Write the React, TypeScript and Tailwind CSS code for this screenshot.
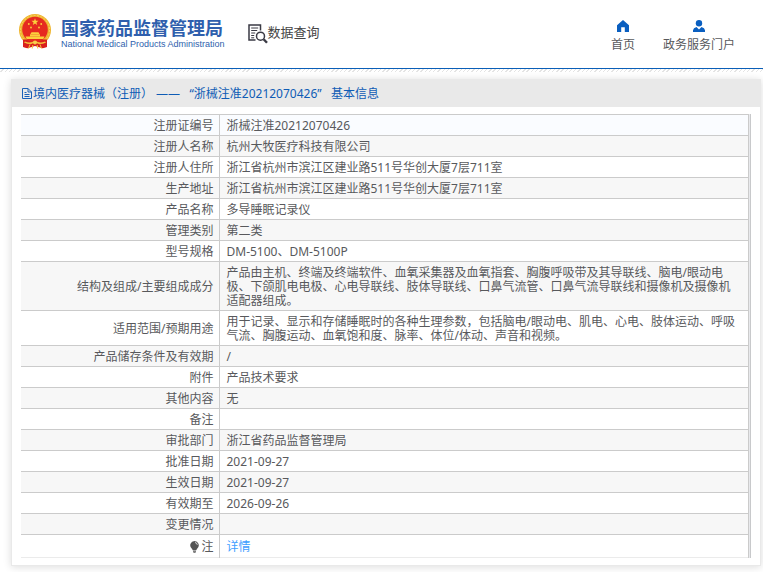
import React from 'react';

type Row = { label: string; value: string };

const ROWS: Row[] = [
  { label: '注册证编号', value: '浙械注准20212070426' },
  { label: '注册人名称', value: '杭州大牧医疗科技有限公司' },
  { label: '注册人住所', value: '浙江省杭州市滨江区建业路511号华创大厦7层711室' },
  { label: '生产地址', value: '浙江省杭州市滨江区建业路511号华创大厦7层711室' },
  { label: '产品名称', value: '多导睡眠记录仪' },
  { label: '管理类别', value: '第二类' },
  { label: '型号规格', value: 'DM-5100、DM-5100P' },
  {
    label: '结构及组成/主要组成成分',
    value:
      '产品由主机、终端及终端软件、血氧采集器及血氧指套、胸腹呼吸带及其导联线、脑电/眼动电极、下颌肌电电极、心电导联线、肢体导联线、口鼻气流管、口鼻气流导联线和摄像机及摄像机适配器组成。',
  },
  {
    label: '适用范围/预期用途',
    value:
      '用于记录、显示和存储睡眠时的各种生理参数，包括脑电/眼动电、肌电、心电、肢体运动、呼吸气流、胸腹运动、血氧饱和度、脉率、体位/体动、声音和视频。',
  },
  { label: '产品储存条件及有效期', value: '/' },
  { label: '附件', value: '产品技术要求' },
  { label: '其他内容', value: '无' },
  { label: '备注', value: '' },
  { label: '审批部门', value: '浙江省药品监督管理局' },
  { label: '批准日期', value: '2021-09-27' },
  { label: '生效日期', value: '2021-09-27' },
  { label: '有效期至', value: '2026-09-26' },
  { label: '变更情况', value: '' },
];

const Emblem: React.FC = () => (
  <svg width="32" height="35" viewBox="0 0 32 35" aria-hidden="true">
    <circle cx="16" cy="16" r="16" fill="#efb52f" />
    <circle cx="16" cy="16" r="14.5" fill="none" stroke="#f8d568" strokeWidth="1" strokeDasharray="2 1.5" />
    <path d="M4 25.500 L4 33 Q8 35 11 33.500 L16 32 L21 33.500 Q24 35 28 33 L28 25.500 Z" fill="#d9201c" />
    <circle cx="16" cy="15.500" r="12.800" fill="#e62a20" />
    <path d="M16 4.300l.9 2.500h2.600l-2.100 1.600.8 2.500-2.200-1.500-2.200 1.500.8-2.500-2.100-1.600h2.600z" fill="#fbd23c" />
    <g fill="#fbd23c">
      <circle cx="9.800" cy="10" r=".9" />
      <circle cx="22.200" cy="10" r=".9" />
      <circle cx="12" cy="13.500" r=".9" />
      <circle cx="20" cy="13.500" r=".9" />
      <path d="M11.500 20l1-1.700h7l1 1.700zM11 20.300h10v2H11zM6.500 22.500h19l-1.200 2.600H7.700z" />
    </g>
    <path d="M6 27.500q5 2 10-.5 5 2.500 10 .5l1 1q-5.500 2.500-8.500 1l-2.500-1-2.500 1q-3 1.500-8.500-1z" fill="#f4c23a" />
    <circle cx="16" cy="28.500" r="2" fill="#f7cf4d" />
    <path d="M11 30.500l-1.500 4M21 30.500l1.500 4M13.800 31l-.6 3.500M18.200 31l.6 3.500" stroke="#f4c23a" strokeWidth="1" />
  </svg>
);

const SearchDocIcon: React.FC = () => (
  <svg width="20" height="20" viewBox="0 0 20 20" fill="none" stroke="#3a3a44" aria-hidden="true">
    <path d="M7.500 16H1V1h11.500v5.500" strokeWidth="1.500" />
    <path d="M3.200 4h7M3.200 6.500h6M3.200 9h4M3.200 11.500h3M3.200 13.800h3" strokeWidth="1" />
    <circle cx="12.500" cy="12.200" r="4" strokeWidth="1.500" />
    <path d="M15.600 15.200l3.400 3.600" strokeWidth="2.400" />
  </svg>
);

const HomeIcon: React.FC = () => (
  <svg width="12" height="12" viewBox="0 0 12 12" fill="#0a5fc0" aria-hidden="true">
    <path d="M6 0L0 5.300V12h4.200V7.300h3.600V12H12V5.300z" />
  </svg>
);

const UserIcon: React.FC = () => (
  <svg width="12" height="12" viewBox="0 0 12 12" fill="#0a5fc0" aria-hidden="true">
    <circle cx="6" cy="3.200" r="3.200" />
    <path d="M0 12V10.200Q.3 8 3.500 7L6 9.500 8.500 7Q11.700 8 12 10.200V12z" />
  </svg>
);

const FileIcon: React.FC = () => (
  <svg width="10" height="11" viewBox="0 0 10 11" fill="none" stroke="#1a60b8" aria-hidden="true">
    <path d="M.5.5h5.500L9.500 4v6.500h-9zM6 .5V4h3.500M2.500 4.500h2M2.500 6.500h5M2.500 8.500h5" />
  </svg>
);

const BulbIcon: React.FC = () => (
  <svg width="9" height="12" viewBox="0 0 9 12" fill="#555" aria-hidden="true">
    <path d="M4.500 0a4.300 4.300 0 0 0-2.800 7.500L3 9.500h3l1.300-2A4.300 4.300 0 0 0 4.500 0zM3 10.200h3v.8l-.8.800H3.800L3 11z" />
    <path d="M5 1.500q2 .3 2.300 2.300" stroke="#fff" strokeWidth=".8" fill="none" />
  </svg>
);

const App: React.FC = () => {
  return (
    <div className="min-h-screen bg-white pb-1 font-['Noto_Sans','Noto_Sans_CJK_SC',sans-serif] text-[12px] leading-[14px] text-[#58595c]">
      <header className="flex h-[69px] items-start justify-between border-b border-[#0a5fb8] pl-[19px] pr-7">
        <div className="flex items-start">
          <a href="#" className="flex gap-[10px] pt-[14px] text-[#2f5fad]">
            <Emblem />
            <span className="flex flex-col pt-[2px]">
              <span className="font-['Noto_Sans_CJK_SC',sans-serif] text-[18px] font-bold leading-[22px]">国家药品监督管理局</span>
              <span className="font-['Liberation_Sans',sans-serif] text-[9px] leading-3">
                National Medical Products Administration
              </span>
            </span>
          </a>
          <a href="#" className="ml-[23px] flex items-start pt-6 text-[#444]">
            <SearchDocIcon />
            <span className="font-['Noto_Sans_CJK_SC',sans-serif] text-[13px] leading-4">数据查询</span>
          </a>
        </div>
        <nav className="flex gap-7 pt-5">
          <a href="#" className="flex flex-col items-center gap-[6px]">
            <HomeIcon />
            <span>首页</span>
          </a>
          <a href="#" className="flex flex-col items-center gap-[6px]">
            <UserIcon />
            <span>政务服务门户</span>
          </a>
        </nav>
      </header>
      <div className="h-[3px] bg-[repeating-linear-gradient(135deg,#fff_0px,#fff_2px,#e4e4e4_2px,#e4e4e4_3px)]" />

      <main className="ml-[11px] mr-[2px] mt-[7px] border border-[#e9e9e9] bg-white shadow-[0_1px_8px_rgba(0,0,0,0.14)]">
        <h1 className="flex h-[27px] items-center gap-px bg-[#e9e9e9] pl-[10px] text-[#0f5cb5]">
          <FileIcon />
          <span className="whitespace-pre">境内医疗器械（注册） ——   “浙械注准20212070426”   基本信息</span>
        </h1>
        <div className="mx-[9px] my-[7px] border-r border-[#c8c9cb] bg-[#e8e9ec] pr-px">
          <table className="w-full table-fixed border-collapse bg-white">
            <colgroup>
              <col className="w-[198px]" />
              <col />
            </colgroup>
            <tbody>
              {ROWS.map((row, i) => (
                <tr
                  key={row.label}
                  className={`border-t border-[#cbcbcb] ${i === 0 ? 'bg-[#fafcff]' : i % 2 ? 'bg-[#f7f7f7]' : 'bg-white'}`}
                >
                  <th scope="row" className="h-[21px] border-r border-[#cbcbcb] pb-[2px] pl-1 pr-[5px] pt-1 text-right font-normal">
                    {row.label}
                  </th>
                  <td className="border-r border-[#cbcbcb] px-[7px] pb-[2px] pt-1">{row.value}</td>
                </tr>
              ))}
              <tr className="border-b border-t border-b-[#ebebeb] border-t-[#cbcbcb]">
                <th scope="row" className="h-[23px] border-r border-[#cbcbcb] pb-[2px] pr-[5px] pt-1 font-normal">
                  <span className="flex items-center justify-end gap-[2px]">
                    <BulbIcon />注
                  </span>
                </th>
                <td className="border-r border-[#cbcbcb] px-[7px] pb-[2px] pt-1">
                  <a href="#" className="text-[#409eff]">详情</a>
                </td>
              </tr>
            </tbody>
          </table>
        </div>
      </main>
    </div>
  );
};

export default App;
